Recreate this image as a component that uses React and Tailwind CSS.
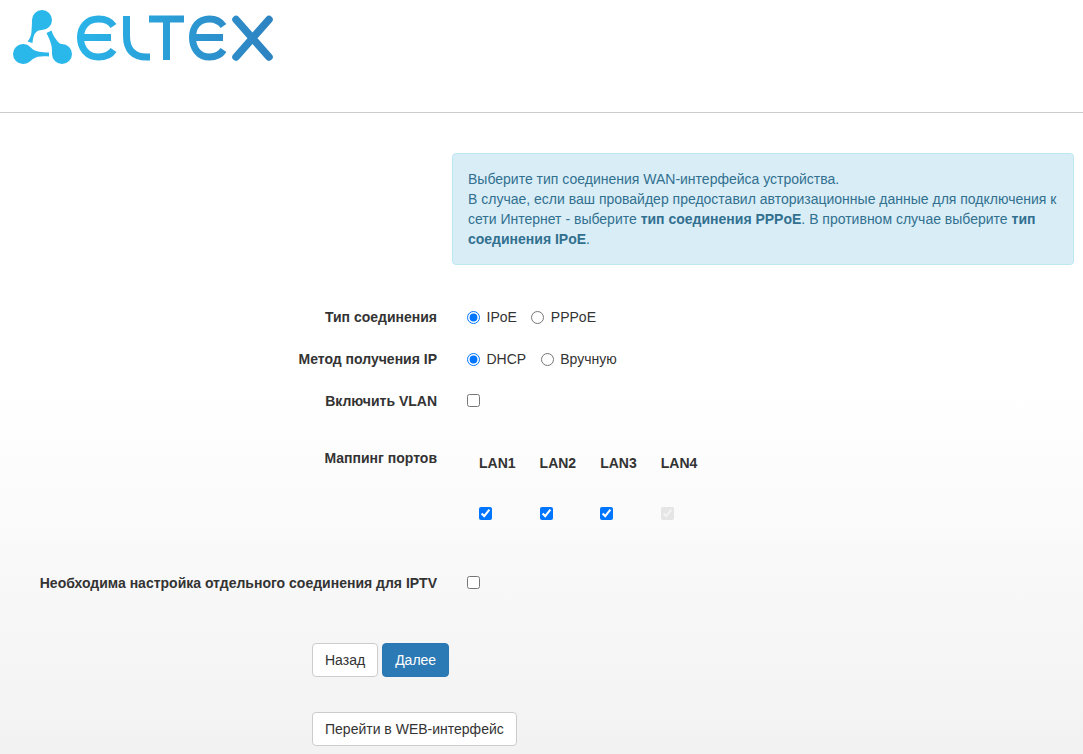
const Logo = () => (
  <svg width="290" height="80" viewBox="0 0 290 80" fill="none" role="img" aria-label="Eltex logo">
    <defs>
      <linearGradient id="eltexGrad" gradientUnits="userSpaceOnUse" x1="70" y1="0" x2="275" y2="0">
        <stop offset="0" stopColor="#29b6ea" />
        <stop offset="1" stopColor="#2e82c0" />
      </linearGradient>
    </defs>
    {/* three nodes */}
    <g fill="#2ab7ea">
      <path d="M32 20a10 10 0 1 1 10 10c-3 0-5.500 1-7 3.500-1 1.500-2 4-2.500 9.500l-5-1.500c2.500-3 4-6.500 4-10 0-3 .5-6 .5-11.500z" />
      <path d="M23 44c5 0 7 3 10 5.500 3 2 8 3 16 3l0 4c-8-.5-12 0-16 2.500-3 2-5 5-10 5a10 10 0 0 1 0-20z" />
      <path d="M62 44a10 10 0 1 1-10 10c0-4 0-7-1-10-1-4-3-8-4.500-11l5-2.500c1 3.500 2.500 6 4 8 2 3.500 4 5.500 6.500 5.500z" />
    </g>
    {/* wordmark */}
    <g stroke="url(#eltexGrad)" strokeWidth="7" fill="none">
      <path d="M113.500 26C110 20.500 105 19 98.500 19 87 19 80.500 27 80.500 37.500S87 57 98.500 57c6.500 0 11.500-1.500 15-7M80 37.500h31" />
      <path d="M126.500 16v20c0 14 7 21 20 21h3.500" />
      <path d="M149 19h35M166.500 19v41" />
      <path d="M223.500 26c-3.500-5-8.500-7-14-7-11 0-17 8-17 18.500S198.500 57 209.500 57c5.500 0 10.500-1.500 14-7M192.500 37.500h30.500" />
      <path d="M236 19.500l33 37.500M269 19.500l-33 37.500" strokeWidth="7.500" strokeLinecap="round" />
    </g>
  </svg>
);

const Row = ({ label, className = '', children }) => (
  <div className={`flex ${className}`}>
    <label className="w-[437px] shrink-0 text-right font-bold text-[#333]">{label}</label>
    <div className="ml-[30px] flex items-center">{children}</div>
  </div>
);

const Radio = ({ name, label, checked }) => (
  <label className="mr-[14.5px] flex items-center">
    <input type="radio" name={name} defaultChecked={checked} className="m-0 mr-[6.5px] size-[13px]" />
    {label}
  </label>
);

const Port = ({ name, disabled }) => (
  <div className="flex w-[60.6px] flex-col">
    <span className="font-bold text-[#333]">{name}</span>
    <input type="checkbox" defaultChecked disabled={disabled} className="m-0 mt-[34px] size-[13px] disabled:opacity-50" />
  </div>
);

const App = () => {
  return (
    <div className="min-h-[754px] bg-[linear-gradient(#fff_52%,#f2f2f2_100%)] font-['Liberation_Sans',Arial,sans-serif] text-sm/5 text-[#333]">
      <header className="h-[113px] border-b border-[#ccc]">
        <Logo />
      </header>

      <div className="ml-[452px] mr-[9px] mt-[40px] rounded border border-[#bce8f1] bg-[#d9edf7] p-[15px] text-[#31708f]">
        Выберите тип соединения WAN-интерфейса устройства.
        <br />
        В случае, если ваш провайдер предоставил авторизационные данные для подключения к сети Интернет - выберите <b>тип соединения PPPoE</b>. В противном случае выберите <b>тип соединения IPoE</b>.
      </div>

      <Row label="Тип соединения" className="mt-[42px] h-5">
        <Radio name="type" label="IPoE" checked />
        <Radio name="type" label="PPPoE" />
      </Row>
      <Row label="Метод получения IP" className="mt-[22px] h-5">
        <Radio name="method" label="DHCP" checked />
        <Radio name="method" label="Вручную" />
      </Row>
      <Row label="Включить VLAN" className="mt-[22px] h-5">
        <input type="checkbox" className="m-0 mb-0.5 size-[13px]" />
      </Row>

      <div className="mt-[37px] flex">
        <label className="w-[437px] shrink-0 text-right font-bold">Маппинг портов</label>
        <div className="ml-[42px] mt-[5px] flex">
          <Port name="LAN1" />
          <Port name="LAN2" />
          <Port name="LAN3" />
          <Port name="LAN4" disabled />
        </div>
      </div>

      <Row label="Необходима настройка отдельного соединения для IPTV" className="mt-[53px] h-5">
        <input type="checkbox" className="m-0 mb-0.5 size-[13px]" />
      </Row>

      <div className="ml-[312px] mt-[50px] flex gap-1">
        <button className="rounded border border-[#ccc] bg-white px-3 py-1.5 text-[#333]">Назад</button>
        <button className="rounded border border-[#2a78b3] bg-[#2c7ab5] px-3 py-1.5 text-white">Далее</button>
      </div>
      <div className="ml-[312px] mt-[35px]">
        <button className="rounded border border-[#ccc] bg-white px-3 py-1.5 text-[#333]">Перейти в WEB-интерфейс</button>
      </div>
    </div>
  );
};

export default App;
